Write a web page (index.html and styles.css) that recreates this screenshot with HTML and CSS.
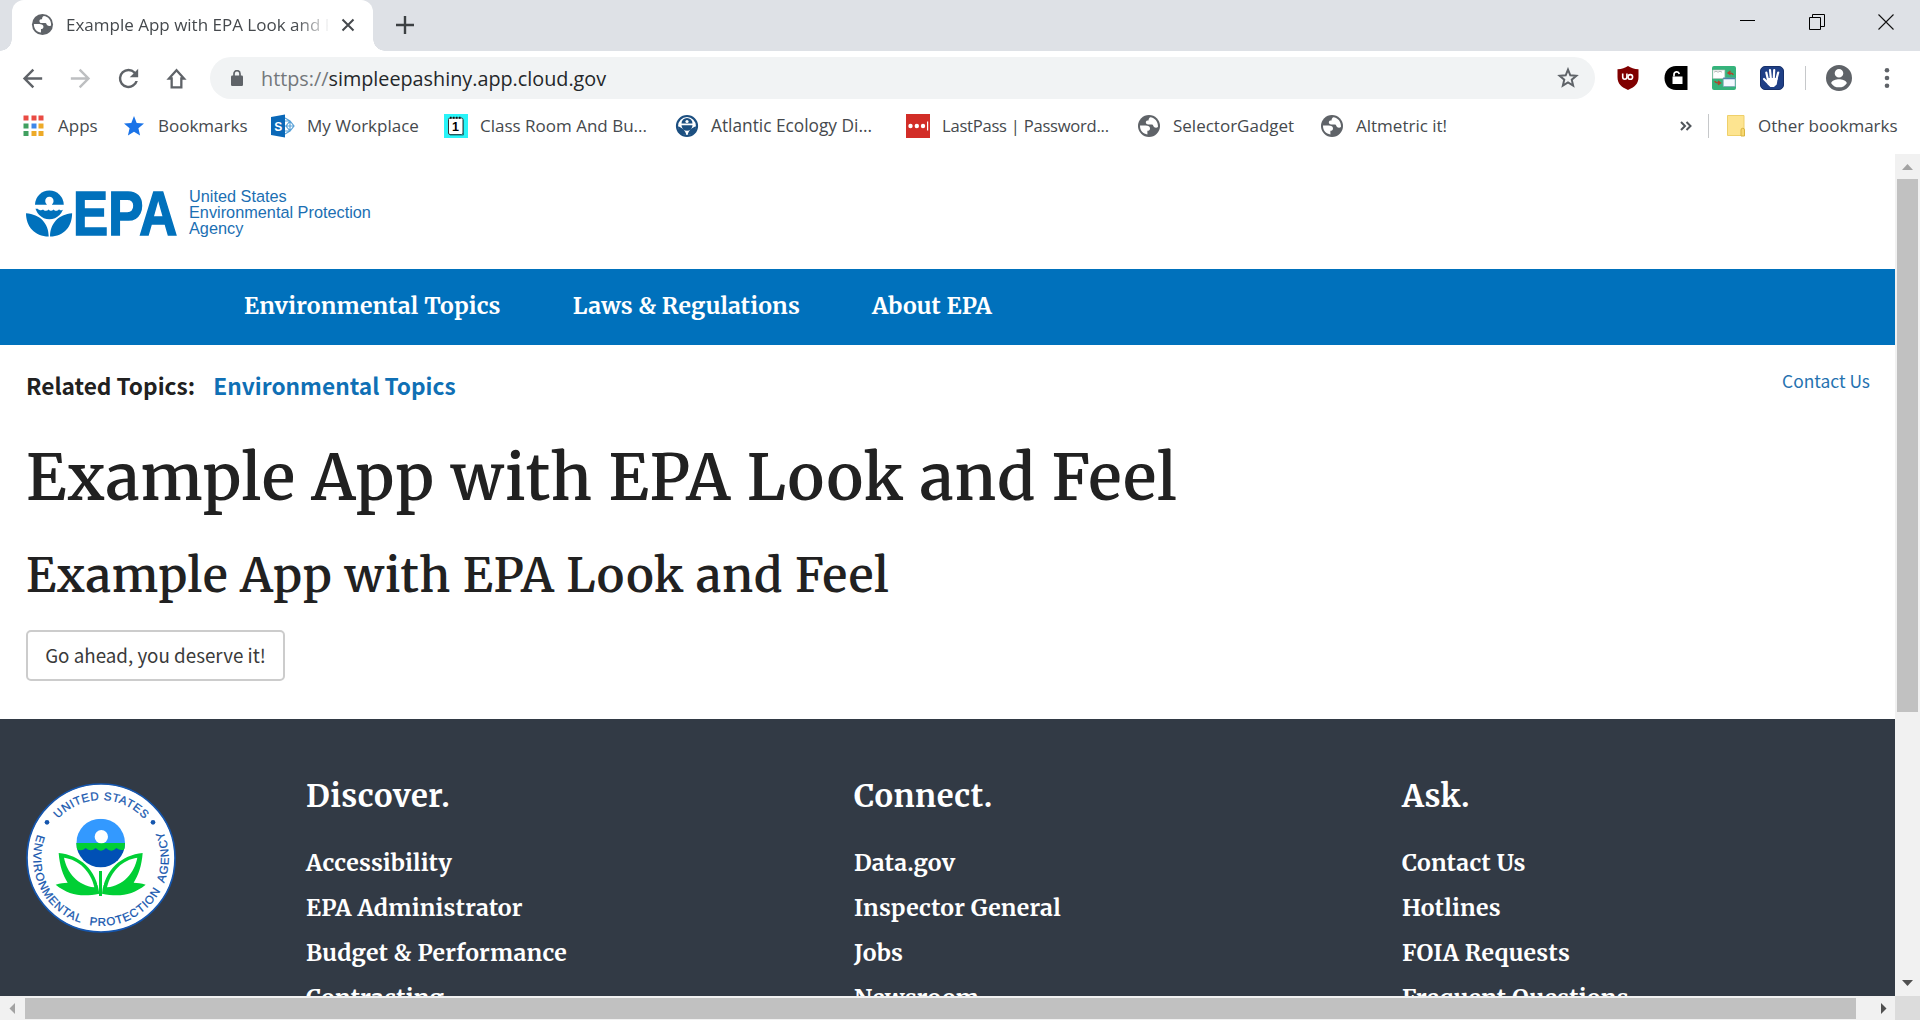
FILE: index.html
```html
<!DOCTYPE html>
<html lang="en">
<head>
<meta charset="utf-8">
<title>Example App with EPA Look and Feel</title>
<link rel="stylesheet" href="styles.css">
</head>
<body>
<svg class="defs" aria-hidden="true">
  <symbol id="globe" viewBox="0 0 24 24">
    <circle cx="12" cy="12" r="11" fill="#5f6368"/>
    <path fill="#fff" d="M3 11.600h5.600c2.600 0 4.400 1 4.400 2.800 0 1.700-1 2.400-2.600 2.400v3.600C6.200 20.300 2.800 16.500 3 11.600zM13.300 3.200c4.700.4 7.900 4.600 7.700 9.500-.8 1.300-3 1.200-4 .2-.8-.7-.8-2.400-2-2.400h-3.600c-2 0-2.600-1-2.600-2.200 0-1.500 1.300-1.700 2.700-1.800.2-1.700.6-2.900 1.800-3.300z"/>
  </symbol>
</svg>

<div class="browser">
  <header class="tabstrip">
    <div class="tab">
      <svg class="tab-icon"><use href="#globe"/></svg>
      <span class="tab-title">Example App with EPA Look and Feel</span>
      <svg class="tab-close" viewBox="0 0 14 14"><path d="M1.500 1.500l11 11M12.500 1.500l-11 11" stroke="#45494d" stroke-width="2"/></svg>
    </div>
    <svg class="new-tab" viewBox="0 0 18 18"><path d="M9 0v18M0 9h18" stroke="#3c4043" stroke-width="2.400"/></svg>
    <div class="window-controls">
      <svg viewBox="0 0 16 16"><path d="M0 6.500h15" stroke="#000"/></svg>
      <svg viewBox="0 0 16 16"><path d="M.5 3.500h11v12H.5zM3.500 3.500v-3h12v12h-4" fill="none" stroke="#000"/></svg>
      <svg viewBox="0 0 16 16"><path d="M.5.5l15 15M15.500.5l-15 15" stroke="#111" stroke-width="1.100"/></svg>
    </div>
  </header>

  <div class="toolbar">
    <div class="btn"><svg class="nav-icon" viewBox="0 0 24 24"><path fill="#5f6368" d="M20 11H7.830l5.590-5.590L12 4l-8 8 8 8 1.410-1.410L7.830 13H20z"/></svg></div>
    <div class="btn"><svg class="nav-icon" viewBox="0 0 24 24"><path fill="#bdbfc1" d="M4 11h12.170l-5.590-5.590L12 4l8 8-8 8-1.410-1.410L16.170 13H4z"/></svg></div>
    <div class="btn"><svg class="nav-icon" viewBox="0 0 24 24"><path fill="#5f6368" d="M17.650 6.350A7.950 7.950 0 0 0 12 4a8 8 0 1 0 7.730 10h-2.080A6 6 0 1 1 12 6c1.660 0 3.140.69 4.220 1.780L13 11h7V4z"/></svg></div>
    <div class="btn"><svg class="nav-icon" viewBox="0 0 24 24"><path fill="none" stroke="#5f6368" stroke-width="1.900" d="M12 5.200L5.800 12H8v7.300h8V12h2.200z"/></svg></div>
    <div class="omnibox">
      <svg class="lock" viewBox="0 0 12 16"><rect y="5.500" width="12" height="10.500" rx="1.200" fill="#5f6368"/><path d="M3 6V3.700a3 3 0 0 1 6 0V6" fill="none" stroke="#5f6368" stroke-width="1.700"/></svg>
      <span class="url"><span class="scheme">https://</span>simpleepashiny.app.cloud.gov</span>
      <svg class="star" viewBox="0 0 20 20"><path fill="none" stroke="#5f6368" stroke-width="1.800" d="M10 2.300l2.100 5.200 5.500.4-4.200 3.600 1.300 5.500L10 14.100 5.300 17l1.300-5.500L2.400 7.900l5.500-.4z"/></svg>
    </div>
    <div class="btn"><svg class="ext" viewBox="0 0 24 24"><path fill="#800000" d="M12 0c3 2 6 3 10.500 3.300V11c0 7-4 10-10.500 13C5.500 21 1.500 18 1.500 11V3.300C6 3 9 2 12 0z"/><path d="M6.700 7.600v3.500a2 2 0 0 0 4.200 0V7.600" fill="none" stroke="#fff" stroke-width="1.600"/><circle cx="14.300" cy="10.900" r="2.300" fill="none" stroke="#fff" stroke-width="1.600"/></svg></div>
    <div class="btn"><svg class="ext" viewBox="0 0 24 24"><path d="M23.500 0H12C5 0 .5 5 .5 12S5 24 12 24h11.500z"/><path fill="#fff" d="M8.500 10.500h10v7.500h-10z"/><path d="M10 10.500V8.700a2.700 2.700 0 0 1 5.300-.8" fill="none" stroke="#fff" stroke-width="1.700"/></svg></div>
    <div class="btn"><svg class="ext" viewBox="0 0 24 24"><rect width="24" height="24" rx="2" fill="#35b37b"/><path fill="#fff" stroke="#bdbdbd" stroke-width=".6" d="M.8 4h12v8.500H.8z"/><path fill="#f4f8ff" stroke="#7aa5b8" stroke-width=".8" d="M11.200 12h12v8.500h-12z"/><path d="M11.200 12.500h12" stroke="#4d85a8" stroke-width="1.500"/><path d="M2 6.200l2-1 2 1 2-1 2 1" stroke="#999" stroke-width=".7" fill="none"/><path d="M21 9c0-1.500-1.500-2-4-2m1.500-2L16 7l2.500 1.700M3 15c0 1.500 2 2 5 2m-2-2l2.500 2L6 18.700" fill="none" stroke="#b3422c" stroke-width="1.400"/></svg></div>
    <div class="btn"><svg class="ext" viewBox="0 0 24 24"><rect x=".5" y=".5" width="23" height="23" rx="4.500" fill="#1f3f86" stroke="#173069"/><g stroke="#fff" stroke-width="2.200" stroke-linecap="round" fill="#fff"><path d="M8 14L6.300 6.500M10.800 12L10 4M13.800 12l.4-8M16.500 13l1.700-6.500M8.500 17.500L4 13"/><path d="M8.500 13h8l-.8 5-2.200 2h-2.700l-2-2z"/></g></svg></div>
    <i class="rule"></i>
    <div class="btn"><svg class="person" viewBox="2 2 20 20"><path fill="#5f6368" d="M12 2a10 10 0 1 0 0 20 10 10 0 0 0 0-20zm0 3a3.300 3.300 0 1 1 0 6.600A3.300 3.300 0 0 1 12 5zm0 14.200a7.200 7.200 0 0 1-6-3.220c.03-1.990 4-3.080 6-3.080s5.970 1.090 6 3.080a7.200 7.200 0 0 1-6 3.220z"/></svg></div>
    <div class="btn"><svg class="ext" viewBox="0 0 24 24" fill="#5f6368"><circle cx="12" cy="4.300" r="2.300"/><circle cx="12" cy="12" r="2.300"/><circle cx="12" cy="19.700" r="2.300"/></svg></div>
  </div>

  <nav class="bookmarks">
    <div class="bm"><svg viewBox="0 0 24 24"><g fill="#e94b43"><path d="M1.500 1.500h5v5h-5zM9.500 1.500h5v5h-5zM16.500 1.500h5v5h-5z"/></g><path fill="#41a060" d="M1.500 9.500h5v5h-5zM1.500 17h5v5h-5z"/><path fill="#3e86e8" d="M9.500 9.500h5v5h-5z"/><path fill="#edaa28" d="M16.500 9.500h5v5h-5zM9.500 17h5v5h-5zM16.500 17h5v5h-5z"/></svg>Apps</div>
    <div class="bm"><svg viewBox="0 0 24 24"><path fill="#1a73e8" d="M12 2l2.700 6.900 7.300.6-5.600 4.800 1.700 7.200L12 17.700l-6.100 3.800 1.700-7.200L2 9.500l7.300-.6z"/></svg>Bookmarks</div>
    <div class="bm"><svg viewBox="0 0 24 24"><path d="M14 4l5 3 4 5-4 5-5 3M14 7h5v10h-5M14 12h9M19 7l-4 5 4 5" fill="none" stroke="#5aa2d8" stroke-width="1.200"/><path fill="#0a68b8" d="M0 3l14-2.500v23L0 21z"/><text x="3.200" y="16.500" font-size="12" font-weight="700" fill="#fff" class="glyph">S</text></svg>My Workplace</div>
    <div class="bm"><svg viewBox="0 0 24 24"><path fill="#29f4f8" d="M0 0h24v24H0z"/><rect x="4.500" y="4" width="14.500" height="16.500" rx="1.500" fill="#fff" stroke="#333"/><path d="M6 3.800h12" stroke="#111" stroke-width="2" stroke-dasharray="1.500 1.500"/><path d="M6 21h13.500V6" fill="none" stroke="#167a80" stroke-width="1"/><text x="8" y="17" font-size="12.500" font-weight="700" class="glyph">1</text></svg>Class Room And Bu...</div>
    <div class="bm bm-wide"><svg viewBox="0 0 24 24"><circle cx="12" cy="12" r="10" fill="#fff" stroke="#1c4f80" stroke-width="2.200"/><path fill="#1c4f80" d="M6.500 9.500a5.500 5.500 0 0 1 11 0zM6.500 11.300h11a5.500 5.500 0 0 1-11 0zM3 12.500c3.500.5 7.500 4 8.300 8.500C6.500 21 3 17.500 3 12.500zM21 12.500c-3.500.5-7.500 4-8.300 8.500C17.500 21 21 17.500 21 12.500z"/><circle cx="12" cy="7.500" r="1.600" fill="#fff"/></svg>Atlantic Ecology Di...</div>
    <div class="bm bm-tight"><svg viewBox="0 0 24 24"><path fill="#d22d27" d="M0 0h24v24H0z"/><g fill="#fff"><circle cx="4.500" cy="12" r="2.200"/><circle cx="10.800" cy="12" r="2.200"/><circle cx="17" cy="12" r="2.200"/><path d="M21 7.500h1.200v9H21z"/></g></svg>LastPass | Password...</div>
    <div class="bm"><svg><use href="#globe"/></svg>SelectorGadget</div>
    <div class="bm"><svg><use href="#globe"/></svg>Altmetric it!</div>
    <div class="more"><svg viewBox="0 0 12 10"><path d="M1 1l4 4-4 4M6.500 1l4 4-4 4" fill="none" stroke="#50555a" stroke-width="2"/></svg><i class="rule"></i></div>
    <div class="bm folder"><svg viewBox="0 0 24 24"><path fill="#fde490" stroke="#efd06a" d="M2.500 1.500h16.500v20H2.500z"/><path fill="#f8d870" stroke="#d9b440" d="M16 22v-6a1.600 1.600 0 0 1 3.500 0v6z"/></svg>Other bookmarks</div>
  </nav>

  <div class="viewport">
    <main class="page">
      <div class="masthead">
        <svg class="logo" viewBox="78 119 452 140">
          <g fill="#0071bc">
            <circle cx="148" cy="163" r="43"/>
            <path d="M78 188c42 3 68 30 68 70-42-1-68-30-68-70zM216 188c-40 3-66 30-66 70 42-1 66-30 66-70z"/>
          </g>
          <path fill="#fff" d="M104 163h36v-2a12.500 12.500 0 1 1 16 0v2h36v12c-6 6-12 6-15 1-5 6-13 6-16 1-6 5-12 5-15 0-5 5-13 5-17 0-4 4-12 3-16-2h-9z"/>
          <text class="logo-word" x="219" y="253" textLength="312" lengthAdjust="spacingAndGlyphs">EPA</text>
        </svg>
        <p class="agency">United States<br>Environmental Protection<br>Agency</p>
      </div>
      <nav class="main-nav"><a>Environmental Topics</a><a>Laws &amp; Regulations</a><a>About EPA</a></nav>
      <section class="content">
        <div class="related">
          <p class="topics">Related Topics: <a>Environmental Topics</a></p>
          <a class="contact">Contact Us</a>
        </div>
        <h1>Example App with EPA Look and Feel</h1>
        <h2>Example App with EPA Look and Feel</h2>
        <button class="action">Go ahead, you deserve it!</button>
      </section>
      <footer class="footer">
        <svg class="seal" viewBox="49 39 450 450">
          <defs>
            <path id="arc-top" d="M100 264a174 174 0 0 1 348 0"/>
            <path id="arc-bottom" d="M84.800 191.400A203 203 0 1 0 463.200 191.400"/>
            <clipPath id="disc"><circle cx="273" cy="219" r="73"/></clipPath>
          </defs>
          <circle cx="274" cy="264" r="222" fill="#fff" stroke="#1556ae" stroke-width="5"/>
          <g clip-path="url(#disc)">
            <path fill="#3399ff" d="M200 146h146v73H200z"/>
            <path fill="#0050b5" d="M200 219h146v76H200z"/>
            <path fill="#00cf35" d="M199 219h148v18q-14 8-27-3-15 16-31 0-15 16-31 0-15 14-30 0-13 12-29 2z"/>
          </g>
          <circle cx="275" cy="200" r="20" fill="#fff"/>
          <g id="leaf">
            <path fill="#00cf35" d="M147 249c63 6 114 50 122 122-50 10-90 6-131-27 14-5 24-5 36-6-14-22-24-50-27-89z"/>
            <path fill="#fff" d="M163 263c44 6 80 40 91 89-50-6-82-43-91-89z"/>
          </g>
          <use href="#leaf" transform="matrix(-1 0 0 1 546 0)"/>
          <path fill="#fff" d="M263 300h20v45h-20z"/>
          <path fill="#00cf35" d="M268 303h9v75h-9z"/>
          <circle cx="112" cy="157" r="7" fill="#1556ae"/><circle cx="430" cy="157" r="7" fill="#1556ae"/>
          <g class="seal-text">
            <text><textPath href="#arc-top" startOffset="129" textLength="290">UNITED STATES</textPath></text>
            <text><textPath href="#arc-bottom" startOffset="2" textLength="794">ENVIRONMENTAL&#160; PROTECTION&#160; AGENCY</textPath></text>
          </g>
        </svg>
        <div class="col"><h3>Discover.</h3><a>Accessibility</a><a>EPA Administrator</a><a>Budget &amp; Performance</a><a>Contracting</a></div>
        <div class="col"><h3>Connect.</h3><a>Data.gov</a><a>Inspector General</a><a>Jobs</a><a>Newsroom</a></div>
        <div class="col"><h3>Ask.</h3><a>Contact Us</a><a>Hotlines</a><a>FOIA Requests</a><a>Frequent Questions</a></div>
      </footer>
    </main>
    <div class="vscroll">
      <svg viewBox="0 0 25 25"><path fill="#a3a3a3" d="M7 16l5.500-6 5.500 6z"/></svg>
      <i class="vthumb"></i>
      <svg viewBox="0 0 25 25"><path fill="#505050" d="M7 9h11l-5.500 6z"/></svg>
    </div>
    <div class="hscroll">
      <svg viewBox="0 0 25 24"><path fill="#a3a3a3" d="M15 7v11l-5.500-5.500z"/></svg>
      <i class="hthumb"></i>
      <svg viewBox="0 0 25 24"><path fill="#505050" d="M11 7v11l5.500-5.500z"/></svg>
    </div>
    <div class="corner"></div>
  </div>
</div>
</body>
</html>
```
FILE: styles.css
```css
* { box-sizing: border-box; }

body {
  margin: 0;
  width: 1920px;
  height: 1020px;
  overflow: hidden;
  background: #fff;
  color: #212121;
  font-family: "Open Sans", "Noto Sans", sans-serif;
}

svg { display: block; flex: none; }
h1, h2, h3, p { margin: 0; }
.defs { width: 0; height: 0; position: absolute; }
.glyph { font-family: "Liberation Sans", sans-serif; }

.browser { display: flex; flex-direction: column; height: 1020px; }

/* Tab strip */
.tabstrip { display: flex; height: 51px; background: #dee1e6; }
.tab {
  position: relative;
  display: flex;
  align-items: center;
  width: 361px;
  margin-left: 12px;
  padding: 0 17px 2px 19px;
  background: #fff;
  border-radius: 12px 12px 0 0;
}
.tab::before, .tab::after {
  content: "";
  position: absolute;
  bottom: 0;
  width: 12px;
  height: 12px;
}
.tab::before { left: -12px; background: radial-gradient(circle at 0 0, transparent 11.5px, #fff 12px); }
.tab::after { right: -12px; background: radial-gradient(circle at 100% 0, transparent 11.5px, #fff 12px); }
.tab-icon { width: 23px; height: 23px; }
.tab-title {
  width: 262px;
  margin-left: 12px;
  overflow: hidden;
  white-space: nowrap;
  font-size: 17px;
  line-height: 26px;
  color: #45494d;
  -webkit-mask-image: linear-gradient(90deg, #000 230px, transparent 264px);
  mask-image: linear-gradient(90deg, #000 230px, transparent 264px);
}
.tab-close { width: 14px; height: 14px; margin: 1px 0 0 13px; }
.new-tab { width: 18px; height: 18px; margin: 16px 0 0 23px; }
.window-controls { display: flex; margin-left: auto; }
.window-controls svg { width: 16px; height: 16px; margin: 14px 26px 0 27px; }

/* Toolbar */
.toolbar { display: flex; align-items: center; height: 54px; padding-left: 8px; }
.btn { display: flex; align-items: center; justify-content: center; flex: none; width: 48px; }
.nav-icon { width: 29px; height: 29px; }
.ext { width: 24px; height: 24px; }
.person { width: 26px; height: 26px; }
.rule { width: 1px; height: 24px; margin: 0 9px; background: #c6c8ca; }
.omnibox {
  display: flex;
  align-items: center;
  width: 1385px;
  height: 42px;
  margin: 0 9px 0 10px;
  padding: 0 16px 0 21px;
  border-radius: 21px;
  background: #f1f3f4;
}
.lock { width: 12px; height: 16px; }
.url { margin: 1px 0 0 18px; font-size: 19.8px; line-height: 28px; color: #24272a; }
.scheme { color: #73777b; }
.star { width: 22px; height: 22px; margin-left: auto; }

/* Bookmarks bar */
.bookmarks {
  display: grid;
  grid-template-columns: 100px 149px 173px 231px 231px 231px 183px 360px 45px 1fr;
  align-items: center;
  height: 49px;
  padding: 0 0 7px 22px;
}
.bm {
  display: flex;
  align-items: center;
  gap: 12px;
  font-size: 17px;
  line-height: 24px;
  color: #45494d;
  white-space: nowrap;
}
.bm svg { width: 24px; height: 24px; }
.bm-wide { font-size: 17.3px; }
.bm-tight { font-size: 16.6px; letter-spacing: -0.25px; }
.folder { gap: 9px; }
.more { display: flex; align-items: center; }
.more svg { width: 12px; height: 10px; }
.more .rule { margin: 0 0 0 16px; }

/* Page area with scrollbars */
.viewport {
  display: grid;
  grid-template: 842px 24px / 1895px 25px;
}
.page { overflow: hidden; }

.masthead { display: flex; height: 115px; padding: 35px 0 0 26px; }
.logo { width: 151px; height: 47px; margin-top: 1px; }
.logo-word {
  fill: #0071bc;
  stroke: #0071bc;
  stroke-width: 5px;
  font: 700 186px "Liberation Sans", sans-serif;
}
.agency {
  margin: -1px 0 0 12px;
  font: 16.3px/16.2px "Liberation Sans", sans-serif;
  color: #1b6fb3;
}

.main-nav {
  display: flex;
  gap: 72px;
  height: 76px;
  padding-left: 244px;
  background: #0071bc;
}
.main-nav a, .footer, h1, h2 { font-family: "Merriweather", "DejaVu Serif Condensed", serif; font-weight: 700; }
.main-nav a { font-size: 23px; line-height: 74px; letter-spacing: 0.15px; color: #fff; white-space: nowrap; }
.main-nav a:first-child { letter-spacing: 0.22px; }

.content { height: 374px; padding: 26px 25px 0 26px; }
.related {
  display: flex;
  justify-content: space-between;
  height: 30px;
  font-family: "Noto Sans CJK JP", sans-serif;
}
.topics { font-size: 22.7px; font-weight: 700; line-height: 30px; }
.topics a { margin-left: 13px; color: #0f70b5; }
.contact { font-size: 17.4px; line-height: 19px; color: #2572b0; }
h1, h2 { font-weight: 600; white-space: nowrap; }
h1 { margin-top: 40px; font-size: 62.3px; line-height: 74px; letter-spacing: 0.88px; }
h2 { margin-top: 33px; font-size: 46.6px; line-height: 56px; letter-spacing: 0.72px; }
.action {
  display: block;
  width: 259px;
  height: 51px;
  margin-top: 26px;
  padding: 0 0 2px;
  border: 2px solid #ccc;
  border-radius: 5px;
  background: #fff;
  color: #3a3a3a;
  font: 18.8px/44px "Noto Sans CJK JP", sans-serif;
}

.footer {
  display: grid;
  grid-template-columns: 280px 548px 548px 1fr;
  height: 277px;
  padding: 56px 0 0 26px;
  background: #323a45;
  color: #fff;
}
.seal { width: 150px; height: 150px; margin-top: 8px; }
.seal-text {
  fill: #1556ae;
  font: 34.5px "Liberation Sans", sans-serif;
  stroke: #1556ae;
  stroke-width: 0.8px;
}
.col { display: flex; flex-direction: column; padding-top: 1px; }
.col h3 { margin-bottom: 24px; font-size: 31px; line-height: 40px; letter-spacing: 0.5px; }
.col a { font-size: 23px; line-height: 45px; letter-spacing: 0.25px; }

.vscroll { display: flex; flex-direction: column; justify-content: space-between; background: #f1f1f1; }
.vscroll svg { width: 25px; height: 25px; }
.vthumb { width: 21px; height: 533px; margin: 0 2px auto; background: #c1c1c1; }
.hscroll { display: flex; background: #f1f1f1; }
.hscroll svg { width: 25px; height: 24px; }
.hthumb { width: 1831px; height: 21px; margin: 2px auto 0 0; background: #c1c1c1; }
.corner { background: #dcdcdc; }
```
